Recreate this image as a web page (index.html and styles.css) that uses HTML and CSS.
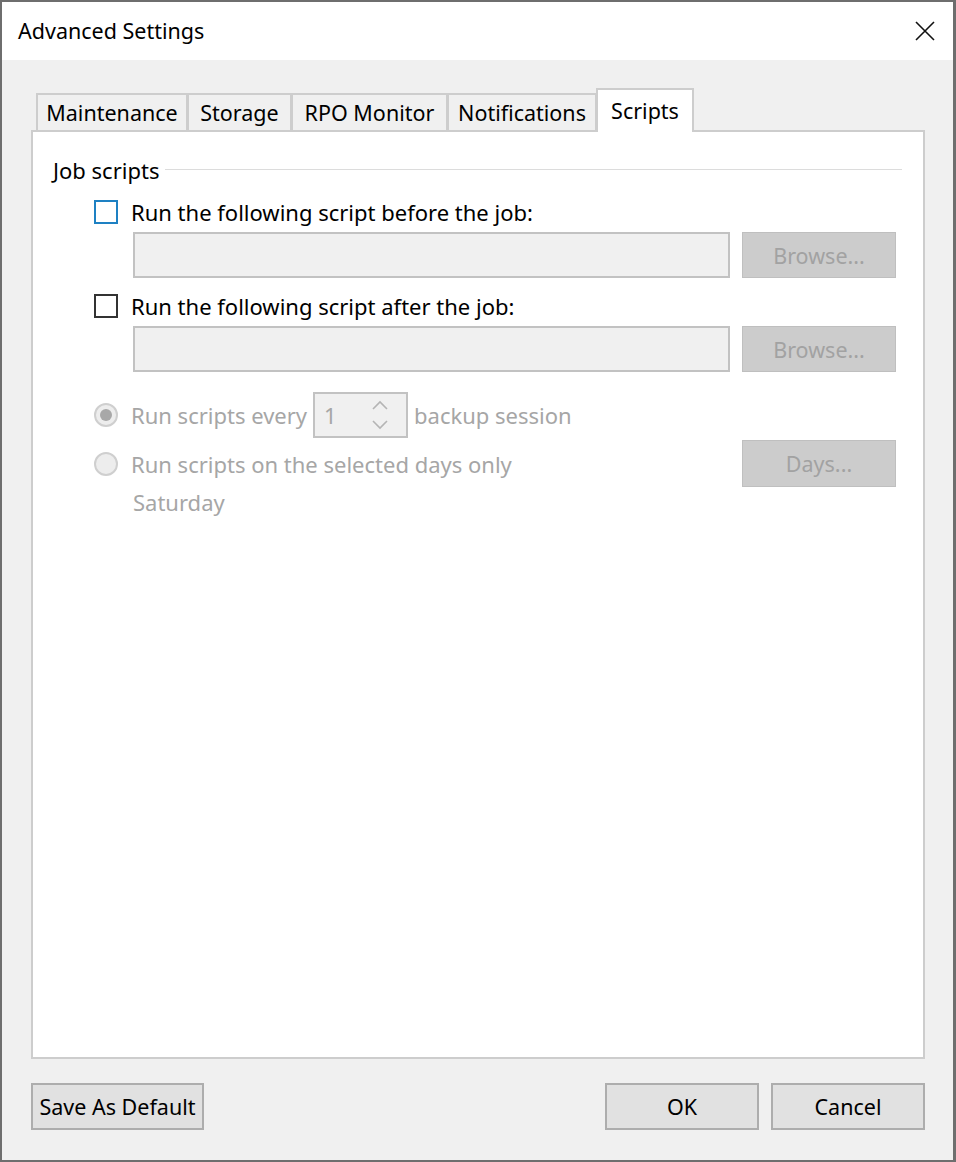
FILE: index.html
```html
<!DOCTYPE html>
<html lang="en">
<head>
  <meta charset="UTF-8" />
  <title>Advanced Settings</title>
  <link rel="stylesheet" href="styles.css">
</head>
<body>
  <div class="window">
    <div class="titlebar">
      <span class="title">Advanced Settings</span>
      <svg class="close" width="22" height="22" viewBox="0 0 22 22">
        <path d="M2 2 L20 20 M20 2 L2 20" stroke="#111" stroke-width="1.6" fill="none" />
      </svg>
    </div>

    <div class="content">
      <div class="tabs">
        <div class="tab tab-maint">Maintenance</div>
        <div class="tab tab-storage">Storage</div>
        <div class="tab tab-rpo">RPO Monitor</div>
        <div class="tab tab-notif">Notifications</div>
        <div class="tab tab-scripts active">Scripts</div>
      </div>

      <div class="panel">
        <div class="group-head">
          <span>Job scripts</span>
          <div class="group-line"></div>
        </div>

        <div class="row check-row first">
          <span class="checkbox focused"></span>
          <span>Run the following script before the job:</span>
        </div>
        <div class="row field-row">
          <div class="text-field"></div>
          <button class="btn-disabled">Browse...</button>
        </div>

        <div class="row check-row second">
          <span class="checkbox"></span>
          <span>Run the following script after the job:</span>
        </div>
        <div class="row field-row">
          <div class="text-field"></div>
          <button class="btn-disabled">Browse...</button>
        </div>

        <div class="row radio-row every">
          <span class="radio checked"></span>
          <span>Run scripts every</span>
          <div class="spinner">
            <span>1</span>
            <svg width="20" height="34" viewBox="0 0 20 34">
              <path d="M3 11 L10 4 L17 11" stroke="#b4b4b4" stroke-width="1.6" fill="none" />
              <path d="M3 23 L10 30 L17 23" stroke="#b4b4b4" stroke-width="1.6" fill="none" />
            </svg>
          </div>
          <span>backup session</span>
        </div>

        <div class="row radio-row days">
          <div class="radio-label">
            <span class="radio"></span>
            <span>Run scripts on the selected days only</span>
          </div>
          <button class="btn-disabled">Days...</button>
        </div>

        <div class="saturday">Saturday</div>
      </div>

      <div class="footer">
        <button class="btn btn-default">Save As Default</button>
        <div class="footer-right">
          <button class="btn">OK</button>
          <button class="btn">Cancel</button>
        </div>
      </div>
    </div>
  </div>
</body>
</html>
```

FILE: styles.css
```css
* {
  margin: 0;
  padding: 0;
  box-sizing: border-box;
  font-family: 'Noto Sans', 'Open Sans', sans-serif;
}

body {
  background: #6b6b6b;
  width: 956px;
  height: 1162px;
  overflow: hidden;
}

.window {
  width: 956px;
  height: 1162px;
  border: 2px solid #6e6e6e;
  border-right-width: 3px;
  background: #f0f0f0;
  display: flex;
  flex-direction: column;
}

.titlebar {
  height: 58px;
  background: #fff;
  display: flex;
  align-items: center;
  justify-content: space-between;
  padding: 0 17px 0 16px;
  flex-shrink: 0;
}

.title {
  font-size: 21.5px;
  color: #000;
  margin-top: -2px;
}

.close {
  display: block;
}

.content {
  flex: 1;
  padding: 28px 28px 0 29px;
  display: flex;
  flex-direction: column;
}

/* Tabs */
.tabs {
  display: flex;
  align-items: flex-end;
  padding-left: 5px;
  height: 42px;
  position: relative;
  z-index: 1;
}

.tab {
  height: 37px;
  background: #f0f0f0;
  border: 2px solid #cdcdcd;
  border-bottom: none;
  margin-right: -1px;
  font-size: 21.5px;
  color: #000;
  display: flex;
  align-items: center;
  justify-content: center;
  white-space: nowrap;
}

.tab-maint { width: 152px; }
.tab-storage { width: 105px; }
.tab-rpo { width: 157px; }
.tab-notif { width: 150px; }

.tab.active {
  width: 98px;
  height: 44px;
  background: #fff;
  margin-bottom: -2px;
  padding-bottom: 2px;
  border-color: #cdcdcd;
}

.panel {
  height: 929px;
  background: #fff;
  border: 2px solid #cdcdcd;
  padding: 0 20px;
  display: flex;
  flex-direction: column;
  font-size: 22px;
  color: #000;
}

.group-head {
  height: 24px;
  margin-top: 26px;
  display: flex;
  align-items: center;
  gap: 6px;
}

.group-line {
  flex: 1;
  height: 1px;
  background: #dcdcdc;
  margin-right: 1px;
  margin-top: -2px;
}

.row {
  display: flex;
  align-items: center;
  padding-left: 41px;
  padding-right: 7px;
  white-space: nowrap;
}

.check-row {
  height: 24px;
  gap: 13px;
}

.check-row.first { margin-top: 18px; }
.check-row.second { margin-top: 16px; }

.checkbox {
  width: 24px;
  height: 24px;
  border: 2px solid #333;
  background: #fff;
  flex-shrink: 0;
}

.checkbox.focused {
  border-color: #1e81c3;
}

.field-row {
  height: 46px;
  margin-top: 8px;
  gap: 12px;
}

.text-field {
  flex: 1;
  height: 46px;
  margin-left: 39px;
  background: #f0f0f0;
  border: 2px solid #c2c2c2;
}

.btn-disabled {
  width: 154px;
  height: 46px;
  background: #cccccc;
  border: 1px solid #bfbfbf;
  color: #a2a2a2;
  font-size: 21.5px;
  flex-shrink: 0;
}

.radio-row {
  color: #a6a6a6;
}

.radio-row.every {
  height: 46px;
  margin-top: 20px;
  gap: 6px;
}

.radio-row.every .radio {
  margin-right: 7px;
}

.radio-row.days {
  height: 47px;
  margin-top: 2px;
  justify-content: space-between;
}

.radio-row.days .btn-disabled {
  height: 47px;
}

.radio-label {
  display: flex;
  align-items: center;
  gap: 13px;
}

.radio {
  width: 24px;
  height: 24px;
  border-radius: 50%;
  border: 2px solid #cfcfcf;
  background: #ededed;
  flex-shrink: 0;
  display: flex;
  align-items: center;
  justify-content: center;
}

.radio.checked::after {
  content: '';
  width: 12px;
  height: 12px;
  border-radius: 50%;
  background: #a8a8a8;
}

.spinner {
  width: 95px;
  height: 46px;
  border: 2px solid #c2c2c2;
  background: #f0f0f0;
  display: flex;
  align-items: center;
  justify-content: space-between;
  padding: 0 16px 0 9px;
  color: #a6a6a6;
}

.spinner svg {
  display: block;
}

.saturday {
  height: 24px;
  margin-top: 3px;
  padding-left: 80px;
  line-height: 24px;
  color: #a6a6a6;
}

/* Footer buttons */
.footer {
  margin-top: 24px;
  display: flex;
  justify-content: space-between;
}

.footer-right {
  display: flex;
  gap: 12px;
}

.btn {
  width: 154px;
  height: 47px;
  background: #e1e1e1;
  border: 2px solid #adadad;
  font-size: 21.5px;
  color: #000;
}

.btn-default {
  width: 173px;
}
```
